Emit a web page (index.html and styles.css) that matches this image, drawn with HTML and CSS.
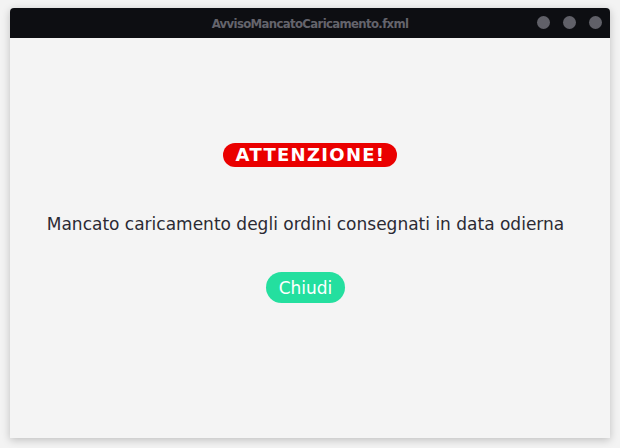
FILE: index.html
```html
<!DOCTYPE html>
<html lang="it">
<head>
<meta charset="utf-8">
<link rel="stylesheet" href="styles.css">
</head>
<body>
<div class="window">
  <div class="titlebar">
    <span class="title">AvvisoMancatoCaricamento.fxml</span>
    <div class="controls">
      <span class="dot"></span><span class="dot"></span><span class="dot"></span>
    </div>
  </div>
  <div class="content">
    <div class="badge">ATTENZIONE!</div>
    <p class="message">Mancato caricamento degli ordini consegnati in data odierna</p>
    <button class="btn">Chiudi</button>
  </div>
</div>
</body>
</html>
```
FILE: styles.css
```css
html, body {
  margin: 0;
  padding: 0;
  background: #f3f3f3;
}
body {
  padding: 8px 10px 10px 10px;
  font-family: "DejaVu Sans", sans-serif;
}
.window {
  width: 600px;
  height: 430px;
  background: #f4f4f4;
  border-radius: 4px 4px 0 0;
  box-shadow: 0 2px 8px rgba(0,0,0,0.22);
  display: flex;
  flex-direction: column;
  overflow: hidden;
}
.titlebar {
  height: 30px;
  background: #0d0e12;
  position: relative;
  display: flex;
  align-items: center;
  justify-content: center;
  flex-shrink: 0;
}
.title {
  font-family: "DejaVu Sans Condensed", "DejaVu Sans", sans-serif;
  font-stretch: condensed;
  font-weight: bold;
  font-size: 13px;
  letter-spacing: -0.65px;
  color: #64646c;
}
.controls {
  position: absolute;
  right: 8px;
  top: 8px;
  display: flex;
  gap: 13px;
}
.dot {
  width: 13px;
  height: 13px;
  border-radius: 50%;
  background: #606068;
}
.content {
  flex: 1;
  display: flex;
  flex-direction: column;
  align-items: center;
  padding-top: 105px;
}
.badge {
  background: #ea0000;
  color: #fff;
  font-weight: bold;
  font-size: 18px;
  letter-spacing: 1.3px;
  line-height: 24px;
  height: 24px;
  padding: 0 12px 0 13px;
  border-radius: 12px;
}
.message {
  margin: 47px 9px 0 0;
  font-size: 17px;
  color: #2b2a33;
  line-height: 20px;
}
.btn {
  margin-top: 38px;
  margin-right: 9px;
  background: #24df9f;
  color: #fff;
  border: none;
  font-family: "DejaVu Sans", sans-serif;
  font-size: 17px;
  height: 31px;
  padding: 0 13px;
  border-radius: 16px;
}
```
